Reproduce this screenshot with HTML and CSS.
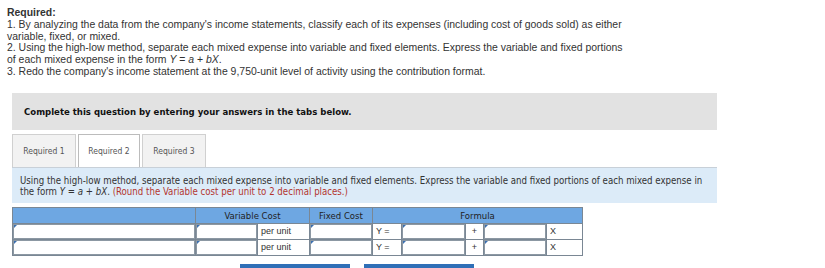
FILE: index.html
```html
<!DOCTYPE html>
<html lang="en">
<head>
  <meta charset="UTF-8" />
  <title>Required</title>
  <link rel="stylesheet" href="styles.css">
</head>
<body>

  <!-- Question text -->
  <div class="question">
    <p class="req-title">Required:</p>
    <p>1. By analyzing the data from the company's income statements, classify each of its expenses (including cost of goods sold) as either variable, fixed, or mixed.</p>
    <p>2. Using the high-low method, separate each mixed expense into variable and fixed elements. Express the variable and fixed portions of each mixed expense in the form <i>Y</i> = <i>a</i> + <i>bX</i>.</p>
    <p>3. Redo the company's income statement at the 9,750-unit level of activity using the contribution format.</p>
  </div>

  <!-- Instructions bar -->
  <div class="instructions">Complete this question by entering your answers in the tabs below.</div>

  <!-- Tabs -->
  <div class="tabs">
    <div class="tab">Required 1</div>
    <div class="tab active">Required 2</div>
    <div class="tab">Required 3</div>
  </div>

  <!-- Tab content -->
  <div class="prompt">
    Using the high-low method, separate each mixed expense into variable and fixed elements. Express the variable and fixed portions of each mixed expense in the form <i>Y</i> = <i>a</i> + <i>bX</i>. <span class="note">(Round the Variable cost per unit to 2 decimal places.)</span>
  </div>

  <table class="answer-table">
    <colgroup>
      <col style="width:183px">
      <col style="width:62px">
      <col style="width:52px">
      <col style="width:63px">
      <col style="width:29px">
      <col style="width:64px">
      <col style="width:18px">
      <col style="width:63px">
      <col style="width:36px">
    </colgroup>
    <tr>
      <th></th>
      <th colspan="2">Variable Cost</th>
      <th>Fixed Cost</th>
      <th colspan="5">Formula</th>
    </tr>
    <tr>
      <td class="cell-input"></td>
      <td class="cell-input"></td>
      <td class="label">per unit</td>
      <td class="cell-input"></td>
      <td class="label">Y =</td>
      <td class="cell-input"></td>
      <td class="label center">+</td>
      <td class="cell-input"></td>
      <td class="label">X</td>
    </tr>
    <tr>
      <td class="cell-input"></td>
      <td class="cell-input"></td>
      <td class="label">per unit</td>
      <td class="cell-input"></td>
      <td class="label">Y =</td>
      <td class="cell-input"></td>
      <td class="label center">+</td>
      <td class="cell-input"></td>
      <td class="label">X</td>
    </tr>
  </table>

  <!-- Navigation buttons -->
  <div class="nav-buttons">
    <div class="nav-btn"></div>
    <div class="nav-btn"></div>
  </div>

</body>
</html>
```

FILE: styles.css
```css
body {
  margin: 0;
  background: white;
  color: #333;
  font-family: "Liberation Sans", Arial, sans-serif;
}

/* Question text */
.question {
  padding: 7px 7px 0 7px;
  font-size: 10.45px;
  line-height: 11.8px;
  width: 626px;
}

.question p {
  margin: 0;
}

.req-title {
  font-weight: bold;
}

/* Instructions bar */
.instructions {
  margin: 15px 108px 0 12px;
  background: #e2e2e2;
  height: 37px;
  line-height: 31px;
  box-sizing: border-box;
  padding: 3px 12px;
  font-family: "DejaVu Sans Condensed", "DejaVu Sans", sans-serif;
  font-weight: bold;
  font-size: 9.5px;
  color: #111;
}

/* Tabs */
.tabs {
  display: flex;
  gap: 2px;
  margin: 4px 0 0 12px;
}

.tab {
  width: 62px;
  height: 32px;
  line-height: 32px;
  text-align: center;
  background: #f2f2f2;
  border: 1px solid #d0d0d0;
  border-bottom: none;
  font-family: "DejaVu Sans Condensed", "DejaVu Sans", sans-serif;
  font-size: 8.5px;
  color: #555;
}

.tab.active {
  background: white;
  border-color: #bcbcbc;
  width: 60px;
}

/* Prompt box */
.prompt {
  margin: 0 108px 0 12px;
  background: #dcebf8;
  border-top: 1px solid #c8d0d8;
  padding: 7px 8px 6px 8px;
  height: 22px;
  font-family: "DejaVu Sans Condensed", "DejaVu Sans", sans-serif;
  font-size: 9.6px;
  line-height: 11px;
  color: #333;
}

.note {
  color: #b3362f;
}

/* Answer table */
.answer-table {
  margin: 4px 0 0 12px;
  border-collapse: collapse;
  table-layout: fixed;
  width: 570px;
  font-size: 9px;
}

.answer-table tr {
  height: 16px;
}

.answer-table th {
  background: #6ea7e2;
  border: 1px solid #7a8794;
  padding: 0;
  font-family: "DejaVu Sans Condensed", "DejaVu Sans", sans-serif;
  font-weight: normal;
  font-size: 9.5px;
  color: #222;
}

.answer-table td {
  border: 1px solid #7a8794;
  padding: 0 3px;
  background: white;
  color: #333;
}

.cell-input {
  position: relative;
  box-shadow: inset -1px -1px 0 #8c98a3, inset 1px 1px 0 #8c98a3;
}

/* small blue marker in each input corner */
.cell-input::before {
  content: "";
  position: absolute;
  left: 1px;
  top: 1px;
  border-top: 3px solid #3a6fb0;
  border-right: 3px solid transparent;
}

.label.center {
  text-align: center;
}

/* Navigation buttons */
.nav-buttons {
  display: flex;
  gap: 14px;
  margin: 8px 0 0 240px;
}

.nav-btn {
  width: 110px;
  height: 20px;
  background: #2f6fb7;
}
```
